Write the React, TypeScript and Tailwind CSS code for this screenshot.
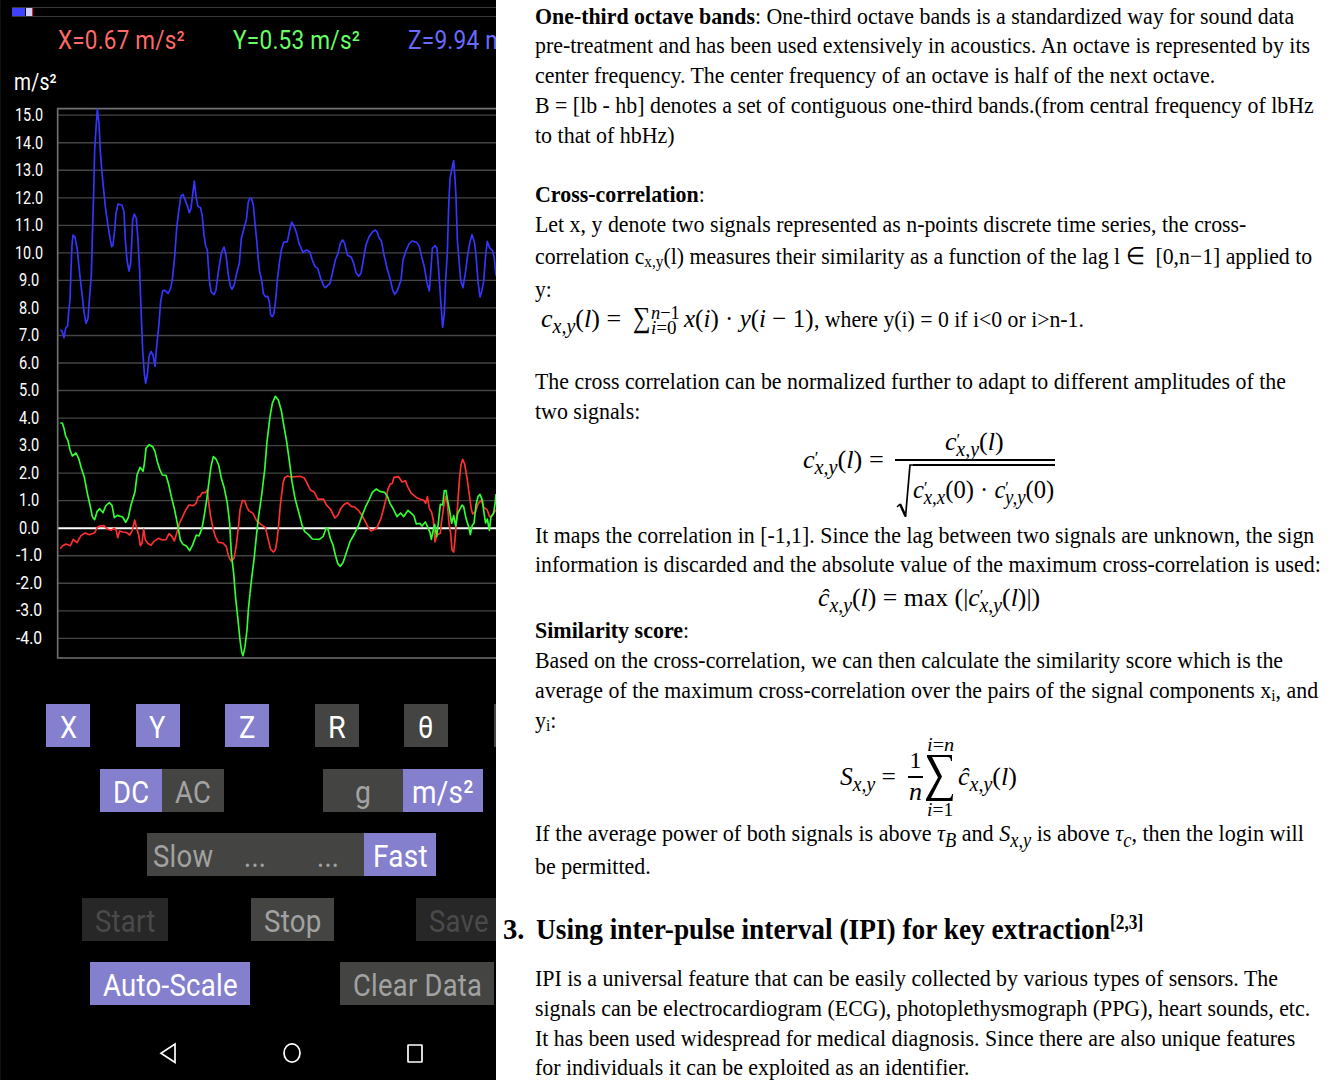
import React, { useLayoutEffect, useRef, useState } from "react";

/** Sets its children on one line and stretches them sideways to an exact width. */
function Fit({ w, className = "", children }: { w: number; className?: string; children: React.ReactNode }) {
  const ref = useRef<HTMLSpanElement>(null);
  const [scale, setScale] = useState(1);
  useLayoutEffect(() => {
    if (ref.current) setScale(w / ref.current.offsetWidth);
  }, [w]);
  return (
    <span className={`block shrink-0 whitespace-nowrap ${className}`} style={{ width: w }}>
      <span ref={ref} className="inline-block origin-left" style={{ transform: `scaleX(${scale})` }}>
        {children}
      </span>
    </span>
  );
}

/* ---------- accelerometer panel ---------- */

const axis = ["15.0", "14.0", "13.0", "12.0", "11.0", "10.0", "9.0", "8.0", "7.0", "6.0", "5.0", "4.0", "3.0", "2.0", "1.0", "0.0", "-1.0", "-2.0", "-3.0", "-4.0"];

const zLeft =
  "M181 690 L186 693 192 713 197 685 203 677 206 635 210 600 213 510 216 435 219 405 225 412 232 450 240 530 247 590 252 635 258 670 264 655 268 600 274 525 278 375 281 280 284 150 289 70 292 28 297 70 301 155 305 205 310 260 316 320 323 370 330 415 335 440 339 435 344 390 348 340 354 312 366 316 372 335 376 420 381 480 387 513 392 490 395 430 398 360 403 342 409 355 414 420 419 515 424 650 428 750 433 820 437 850 442 825 447 770 453 754 459 765 465 799 470 740 477 670 482 605 488 572 495 571 504 580 511 568 517 540 524 470 530 385 536 335 543 288 549 283 557 304 563 320 568 338 573 325 578 283 583 243 588 290 594 319 602 324 607 350 612 405 617 438 622 450 628 540 633 575 642 584 648 570 655 515 664 460 672 441 678 465 685 525 691 558 696 568 703 553 710 520 718 490 724 415 732 385 739 360 745 305 750 294";
const zRight =
  "M0 294 L4 295 10 315 15 370 20 420 25 480 29 515 35 540 40 580 46 590 53 589 58 605 62 645 67 650 72 640 77 600 82 540 88 490 94 450 101 427 112 425 118 395 125 366 131 377 140 400 147 430 153 443 158 457 170 450 179 455 187 480 195 500 203 505 212 535 221 557 226 563 240 550 247 520 256 480 264 460 271 430 278 420 284 430 292 465 304 472 311 490 318 518 326 529 333 520 340 480 348 435 357 410 368 395 376 390 382 397 387 413 394 422 401 460 410 500 421 540 428 570 434 583 442 572 453 540 459 480 467 455 477 432 486 423 500 427 508 440 515 470 523 500 530 545 538 573 542 520 547 445 555 437 561 445 566 510 572 600 578 682 583 640 587 540 592 460 596 320 600 235 605 210 611 182 615 235 618 290 622 420 627 480 632 540 639 563 646 520 653 465 660 425 666 404 673 425 678 465 684 545 690 591 695 575 701 545 707 465 712 424 718 442 728 453 733 475 738 527";
const yLeft =
  "M181 129 L187 129 192 145 197 168 204 182 210 210 217 228 228 219 236 235 244 265 253 292 262 340 270 375 277 410 284 419 291 395 299 386 309 398 317 378 328 368 336 376 343 413 352 406 368 411 377 427 385 412 393 375 405 335 411 285 420 262 429 274 433 252 438 205 447 194 458 200 465 215 472 245 480 270 487 285 498 286 506 313 514 350 524 390 532 430 541 480 549 493 560 499 569 512 577 497 589 465 597 468 606 445 613 405 620 360 627 305 633 260 640 230 648 237 656 255 664 295 673 325 682 370 689 430 694 520 701 580 707 655 714 720 720 780 725 815 729 827 735 800 741 750 745 690 750 640";
const yRight =
  "M0 640 L5 595 13 530 19 470 25 415 35 345 44 270 51 185 60 110 67 70 76 49 85 60 94 92 102 140 110 185 119 250 126 305 135 355 147 400 156 435 164 455 175 463 187 477 208 478 219 470 229 443 233 445 241 475 249 495 256 525 263 550 271 559 279 548 290 515 300 485 313 462 324 440 335 410 347 380 357 360 367 337 379 327 389 334 404 337 413 351 420 370 430 387 441 410 452 399 461 410 474 391 485 401 492 408 499 432 509 430 516 438 526 426 534 443 540 458 544 478 550 448 554 433 560 470 566 420 571 373 578 375 583 332 588 332 593 362 599 393 605 430 611 407 617 438 623 400 631 385 636 375 641 380 648 415 656 440 661 464 667 435 672 430 678 375 684 350 690 343 697 361 703 405 707 429 712 417 718 451 723 410 731 400 736 365 738 342";
const xLeft =
  "M181 506 L188 497 198 492 211 497 220 478 231 488 243 467 255 459 268 464 284 458 292 442 300 438 312 437 322 447 333 451 343 445 349 452 353 473 359 453 369 456 380 458 389 465 397 451 404 420 409 440 416 465 421 497 426 490 431 447 436 480 443 490 453 496 462 484 475 475 487 480 498 479 507 461 515 468 523 483 530 460 539 428 547 412 557 390 567 375 580 377 588 370 595 350 600 350 607 338 616 338 622 330 627 375 632 410 638 440 646 470 655 487 669 489 679 500 686 530 694 544 702 535 709 495 716 435 720 390 727 362 734 362 741 382 747 393 750 393";
const xRight =
  "M0 394 L9 400 20 423 33 433 46 442 54 475 62 508 70 516 76 510 81 482 86 435 91 375 99 310 104 293 112 288 122 291 150 289 163 294 170 307 181 330 193 337 204 358 220 357 230 376 241 387 255 414 264 405 272 386 281 374 292 368 304 379 314 381 327 393 337 408 346 425 355 443 363 453 380 445 393 415 401 385 409 352 414 327 420 313 427 310 432 292 446 290 456 306 466 302 474 322 484 340 500 353 512 358 521 361 527 370 532 350 538 385 545 397 550 420 555 486 560 465 571 460 574 430 581 380 587 350 592 370 597 430 602 460 606 510 611 516 615 480 619 425 624 360 629 290 633 255 638 238 644 252 652 300 658 345 664 388 668 402 677 394 684 372 694 360 701 382 711 389 719 410 725 409 731 397 738 390";

function Chart() {
  return (
    <svg className="block h-[554px] w-[440px] shrink-0" viewBox="168 318 1320 1662" fill="none">
      {axis.map((label, i) => (
        <path key={label} d={`M174 ${345.6 + i * 82.6}H1488`} stroke={label === "0.0" ? "#ffffff" : "#454545"} strokeWidth={label === "0.0" ? 6 : 4} />
      ))}
      <path d="M1488 326H173V1974H1488" stroke="#707070" strokeWidth="5" />
      <g strokeWidth="5" strokeLinejoin="round" stroke="#ff3030">
        <path d={xLeft} transform="translate(0 1140)" />
        <path d={xRight} transform="translate(750 1140)" />
      </g>
      <g strokeWidth="5" strokeLinejoin="round" stroke="#30ff30">
        <path d={yLeft} transform="translate(0 1140)" />
        <path d={yRight} transform="translate(750 1140)" />
      </g>
      <g strokeWidth="5" strokeLinejoin="round" stroke="#3535ff">
        <path d={zLeft} transform="translate(0 300)" />
        <path d={zRight} transform="translate(750 300)" />
      </g>
    </svg>
  );
}

const tones = {
  on: "bg-[#8480ce] text-white",
  off: "bg-[#444542] text-white",
  dim: "bg-[#444542] text-[#a2a2a2]",
  disabled: "bg-[#272727] text-[#4a4a4a]",
};

function Btn({ label, w, text, tone }: { label: string; w: number; text: number; tone: keyof typeof tones }) {
  return (
    <button className={`flex h-[43px] shrink-0 items-center justify-center pt-0.5 text-[32px] leading-none tracking-[0.01em] ${tones[tone]}`} style={{ width: w }}>
      <Fit w={text}>{label}</Fit>
    </button>
  );
}

function Sensor() {
  return (
    <section className="flex h-[1080px] w-[496px] shrink-0 flex-col overflow-hidden border-l border-[#101010] bg-black font-['Roboto'] text-white">
      <div className="mt-[7px] ml-[11px] flex h-[10px] w-[485px] shrink-0 border-y border-[#3a3a3a]">
        <div className="w-[13px] bg-[#4040ff]" />
        <div className="ml-px w-[6px] bg-[#d0d0f4]" />
        <div className="w-px bg-[#e02020]" />
      </div>
      <div className="mt-[8px] ml-[57px] flex h-[30px] w-[439px] shrink-0 text-[26px] leading-[30px] tracking-[0.01em]">
        <Fit w={127} className="mr-[48px] text-[#ff6a66]">X=0.67 m/s²</Fit>
        <Fit w={127} className="mr-[48px] text-[#66ff66]">Y=0.53 m/s²</Fit>
        <Fit w={127} className="text-[#6a6aff]">Z=9.94 m/s²</Fit>
      </div>
      <div className="mt-[15px] ml-[13px] h-[26px] shrink-0 text-[23px] leading-[26px] tracking-[0.01em]">
        <Fit w={43}>m/s²</Fit>
      </div>
      <div className="mt-[10px] flex h-[554px] shrink-0">
        <div className="-mt-[4px] flex w-[57px] shrink-0 flex-col pr-[1px]">
          {axis.map((label) => (
            <div key={label} className="flex h-[27.53px] shrink-0 items-center justify-center text-[17.5px] leading-none">
              <Fit w={label.length === 3 ? 20 : label[0] === "-" ? 26 : 28}>{label}</Fit>
            </div>
          ))}
        </div>
        <div className="-ml-[2px]">
          <Chart />
        </div>
      </div>
      <div className="mt-[44px] ml-[45px] flex shrink-0 gap-[45.6px]">
        <Btn label="X" w={44} text={17} tone="on" />
        <Btn label="Y" w={44} text={17} tone="on" />
        <Btn label="Z" w={44} text={17} tone="on" />
        <Btn label="R" w={44} text={18} tone="off" />
        <Btn label="θ" w={44} text={16} tone="off" />
        <Btn label="φ" w={44} text={17} tone="off" />
      </div>
      <div className="mt-[22px] ml-[99px] flex shrink-0">
        <Btn label="DC" w={62} text={36} tone="on" />
        <Btn label="AC" w={62} text={36} tone="dim" />
        <div className="w-[99px] shrink-0" />
        <Btn label="g" w={80} text={16} tone="dim" />
        <Btn label="m/s²" w={80} text={62} tone="on" />
      </div>
      <div className="mt-[21px] ml-[146px] flex shrink-0">
        <Btn label="Slow" w={72} text={60} tone="dim" />
        <Btn label="..." w={72} text={22} tone="dim" />
        <Btn label="..." w={73} text={22} tone="dim" />
        <Btn label="Fast" w={72} text={55} tone="on" />
      </div>
      <div className="mt-[22px] ml-[81px] flex shrink-0">
        <Btn label="Start" w={86} text={61} tone="disabled" />
        <div className="w-[83px] shrink-0" />
        <Btn label="Stop" w={83} text={58} tone="dim" />
        <div className="w-[82px] shrink-0" />
        <Btn label="Save" w={86} text={60} tone="disabled" />
      </div>
      <div className="mt-[21px] ml-[89px] flex shrink-0">
        <Btn label="Auto-Scale" w={160} text={135} tone="on" />
        <div className="w-[90px] shrink-0" />
        <Btn label="Clear Data" w={154} text={129} tone="dim" />
      </div>
      <div className="mt-[37px] ml-[158px] flex shrink-0 justify-between pr-[72px]">
        <svg className="h-[23px] w-[18px]" viewBox="0 0 18 23" fill="none" stroke="#fff" strokeWidth="1.7"><path d="M16 2V20.5L2 11.3Z" /></svg>
        <svg className="h-[23px] w-[18px]" viewBox="0 0 18 23" fill="none" stroke="#fff" strokeWidth="1.7"><ellipse cx="9" cy="11" rx="8" ry="9.2" /></svg>
        <svg className="h-[23px] w-[18px]" viewBox="0 0 18 23" fill="none" stroke="#fff" strokeWidth="1.7"><rect x="2" y="3" width="14" height="17" rx="0.5" /></svg>
      </div>
    </section>
  );
}

/* ---------- text page ---------- */

/** One text line; h is the distance from the previous baseline. */
function Line({ h, w, children, indent = 0 }: { h: number; w: number; indent?: number; children: React.ReactNode }) {
  return (
    <div className="flex shrink-0 items-end" style={{ height: h, paddingLeft: indent }}>
      <Fit w={w} className="h-[30px] leading-[30px]">{children}</Fit>
    </div>
  );
}

const Sub = ({ children }: { children: React.ReactNode }) => <span className="align-[-6px] text-[20px] leading-none">{children}</span>;

/** c with a prime stacked above its subscript. */
const CPrime = ({ sub }: { sub: string }) => (
  <>
    <i>c</i>
    <span className="-mr-[4px] align-[5px] text-[17px] leading-none">′</span>
    <i><Sub>{sub}</Sub></i>
  </>
);

export default function App() {
  return (
    <main className="flex h-[1080px] w-[1344px] overflow-hidden bg-white">
      <Sensor />
      <article className="flex w-[848px] shrink-0 flex-col pl-[39px] font-['Liberation_Serif'] text-[24px] text-black">
        <Line h={31} w={759}><b>One-third octave bands</b>: One-third octave bands is a standardized way for sound data</Line>
        <Line h={29} w={775}>pre-treatment and has been used extensively in acoustics. An octave is represented by its</Line>
        <Line h={30} w={680}>center frequency. The center frequency of an octave is half of the next octave.</Line>
        <Line h={30} w={779}>B = [lb - hb] denotes a set of contiguous one-third bands.(from central frequency of lbHz</Line>
        <Line h={30} w={140}>to that of hbHz)</Line>
        <Line h={59} w={170}><b>Cross-correlation</b>:</Line>
        <Line h={30} w={711}>Let x, y denote two signals represented as n-points discrete time series, the cross-</Line>
        <Line h={32} w={777.5}>correlation c<span className="align-[-3px] text-[17px] leading-none">x,y</span>(l) measures their similarity as a function of the lag l ∈ &nbsp;[0,n−1] applied to</Line>
        <Line h={33} w={17}>y:</Line>
        <div className="flex h-[30px] shrink-0 items-end pl-[6px]">
          <Fit w={80} className="h-[30px] text-[26px] leading-[30px]"><i>c<Sub>x,y</Sub></i>(<i>l</i>) =</Fit>
          <Fit w={18} className="ml-[12px] h-[32px] text-[29px] leading-[30px]">∑</Fit>
          <div className="flex h-[29px] w-[29px] flex-col text-[19px]">
            <Fit w={29} className="h-[15px] leading-[15px]"><i>n</i>−1</Fit>
            <Fit w={26} className="h-[15px] leading-[15px]"><i>i</i>=0</Fit>
          </div>
          <Fit w={130} className="ml-[4px] h-[30px] text-[26px] leading-[30px]"><i>x</i>(<i>i</i>) · <i>y</i>(<i>i</i> − 1)</Fit>
          <Fit w={270} className="h-[30px] leading-[30px]">, where y(i) = 0 if i&lt;0 or i&gt;n-1.</Fit>
        </div>
        <Line h={62} w={751}>The cross correlation can be normalized further to adapt to different amplitudes of the</Line>
        <Line h={30} w={105}>two signals:</Line>
        <div className="flex h-[94px] shrink-0 pl-[268px]">
          <Fit w={81} className="mt-[19px] h-[30px] text-[26px] leading-[30px]"><CPrime sub="x,y" />(<i>l</i>) =</Fit>
          <div className="ml-[11px] flex w-[162px] flex-col">
            <Fit w={59} className="ml-[50px] h-[33px] text-[26px] leading-[31px]"><CPrime sub="x,y" />(<i>l</i>)</Fit>
            <div className="h-[2px] w-[160px] shrink-0 bg-black" />
            <div className="mt-[3px] flex shrink-0">
              <svg className="h-[56px] w-[18px] shrink-0" viewBox="0 0 18 56" fill="none" stroke="#000"><path d="M2 43L5 40" strokeWidth="1.5" /><path d="M5 40L10.5 52" strokeWidth="2.5" /><path d="M10.5 53L15 1H18" strokeWidth="1.7" /></svg>
              <div className="h-[50px] w-[142px] border-t-2 border-black pt-[9px]">
                <Fit w={141} className="h-[30px] text-[26px] leading-[30px]"><CPrime sub="x,x" />(0) · <CPrime sub="y,y" />(0)</Fit>
              </div>
            </div>
          </div>
        </div>
        <Line h={30} w={779.5}>It maps the correlation in [-1,1]. Since the lag between two signals are unknown, the sign</Line>
        <Line h={29} w={786}>information is discarded and the absolute value of the maximum cross-correlation is used:</Line>
        <div className="h-[34px] shrink-0 text-[26px]">
          <Line h={34} w={222} indent={283}><i>ĉ<Sub>x,y</Sub></i>(<i>l</i>) = max (|<CPrime sub="x,y" />(<i>l</i>)|)</Line>
        </div>
        <Line h={32} w={154}><b>Similarity score</b>:</Line>
        <Line h={30} w={748}>Based on the cross-correlation, we can then calculate the similarity score which is the</Line>
        <Line h={30} w={783}>average of the maximum cross-correlation over the pairs of the signal components x<span className="align-[-3px] text-[17px] leading-none">i</span>, and</Line>
        <Line h={30} w={21}>y<span className="align-[-3px] text-[17px] leading-none">i</span>:</Line>
        <div className="flex h-[82px] shrink-0 pl-[305px]">
          <Fit w={56} className="mt-[27px] h-[30px] text-[26px] leading-[30px]"><i>S<Sub>x,y</Sub></i> =</Fit>
          <div className="mt-[13px] ml-[12px] flex w-[15px] flex-col items-center">
            <Fit w={12} className="h-[25px] leading-[25px]">1</Fit>
            <div className="mt-[3px] h-[2px] w-[15px] shrink-0 bg-black" />
            <Fit w={13} className="h-[28px] text-[26px] leading-[28px]"><i>n</i></Fit>
          </div>
          <div className="ml-[2px] flex w-[30px] flex-col items-center text-[18px]">
            <Fit w={27} className="h-[20px] leading-[20px]"><i>i</i>=<i>n</i></Fit>
            <svg className="h-[46px] w-[28px] shrink-0" viewBox="0 0 28 46" fill="#000"><path d="M1 0H26V6H25Q24.500 2 22 2H6L16 21.500L5 43H23Q25.500 43 26 39H27L26.500 46H0V44L12 22.500L1 2Z" /></svg>
            <Fit w={26} className="h-[19px] leading-[19px]"><i>i</i>=1</Fit>
          </div>
          <Fit w={59} className="mt-[27px] ml-[3px] h-[30px] text-[26px] leading-[30px]"><i>ĉ<Sub>x,y</Sub></i>(<i>l</i>)</Fit>
        </div>
        <Line h={31} w={769}>If the average power of both signals is above <i>τ<Sub>B</Sub></i> and <i>S<Sub>x,y</Sub></i> is above <i>τ<Sub>c</Sub></i>, then the login will</Line>
        <Line h={33} w={116}>be permitted.</Line>
        <div className="-ml-[33px] flex h-[66px] shrink-0 items-end pl-[1px] text-[30px] font-bold">
          <Fit w={22} className="h-[36px] leading-[36px]">3.</Fit>
          <Fit w={574} className="ml-[11px] h-[36px] leading-[36px]">Using inter-pulse interval (IPI) for key extraction</Fit>
          <Fit w={33} className="h-[40px] text-[20px] leading-[30px]">[2,3]</Fit>
        </div>
        <Line h={46} w={743}>IPI is a universal feature that can be easily collected by various types of sensors. The</Line>
        <Line h={30} w={775}>signals can be electrocardiogram (ECG), photoplethysmograph (PPG), heart sounds, etc.</Line>
        <Line h={30} w={760}>It has been used widespread for medical diagnosis. Since there are also unique features</Line>
        <Line h={29} w={435}>for individuals it can be exploited as an identifier.</Line>
      </article>
    </main>
  );
}
